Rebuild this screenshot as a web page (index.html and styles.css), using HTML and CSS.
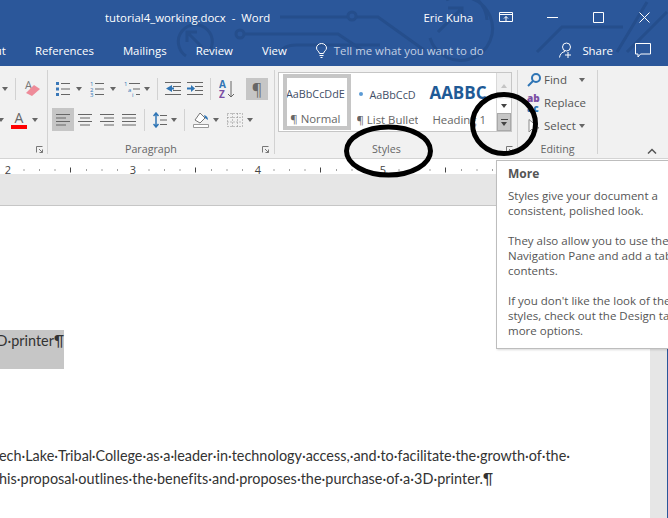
FILE: index.html
```html
<!DOCTYPE html>
<html lang="en">
  <head>
    <meta charset="UTF-8" />
    <title>tutorial4_working.docx - Word</title>
    <link rel="stylesheet" href="styles.css">
  </head>
  <body>
    <div class="window">
      <!-- Title bar and tabs -->
      <header class="top">
        <svg class="circuit" width="668" height="66" viewBox="0 0 668 66">
          <g fill="none" stroke="#254e8c" stroke-width="3">
            <path d="M186 56 A17 17 0 1 1 206 55" />
            <path d="M202 47 L188 33 M187 42 V32 H197" />
            <path d="M280 17 H348 M356 17 H378 L424 50" />
            <circle cx="352" cy="16" r="4" />
            <circle cx="240" cy="34" r="4" />
            <path d="M244 34 H338 L362 50" />
            <path d="M280 52 Q284 45 296 45 H380" />
            <path d="M430 38 A32 32 0 1 0 446 0 M478 0 A32 32 0 0 1 487 20" />
            <path d="M438 32 L460 10 M448 8 H462 V22" />
            <path d="M537 52 L562 27 H623 M617 52 L647 2 M627 52 L667 12" />
          </g>
        </svg>
        <div class="title-row">
          <span class="doc-title">tutorial4_working.docx&nbsp; - &nbsp;Word</span>
          <span class="user-name">Eric Kuha</span>
          <span class="win-btn">
            <svg width="14" height="11" viewBox="0 0 14 11" fill="none" stroke="#fff"><path d="M.5 .5H13.5V9.5H.5ZM.5 2.5H13.5M7 9V4.5M5 6.5L7 4.5L9 6.5" /></svg>
          </span>
          <span class="win-btn">
            <svg width="11" height="11" viewBox="0 0 11 11" stroke="#fff"><path d="M0 5.5H11" /></svg>
          </span>
          <span class="win-btn">
            <svg width="11" height="11" viewBox="0 0 11 11" fill="none" stroke="#fff"><path d="M.5 .5H10.5V10.5H.5Z" /></svg>
          </span>
          <span class="win-btn">
            <svg width="11" height="11" viewBox="0 0 11 11" stroke="#fff"><path d="M.5 .5L10.5 10.5M10.5 .5L.5 10.5" /></svg>
          </span>
        </div>
        <nav class="tab-row">
          <span class="tab tab-cut">Layout</span>
          <span class="tab">References</span>
          <span class="tab">Mailings</span>
          <span class="tab">Review</span>
          <span class="tab">View</span>
          <span class="tell-me">
            <svg width="11" height="15" viewBox="0 0 11 15" fill="none" stroke="#fff"><path d="M3.5 10.5C3 8 .5 7.5 .5 5A5 4.5 0 0 1 10.5 5C10.5 7.5 8 8 7.5 10.5ZM3.5 12.5H7.5M4.500 14.5H6.5" /></svg>
            Tell me what you want to do
          </span>
          <span class="share">
            <svg width="16" height="16" viewBox="0 0 16 16" fill="none" stroke="#fff"><circle cx="7.5" cy="5" r="4" /><path d="M.5 15.5C1 12 3 10 6 9.5M9 10V16M6 13H12" /></svg>
            Share
          </span>
          <svg class="comment" width="16" height="15" viewBox="0 0 16 15" fill="none" stroke="#fff"><path d="M.5 .5H15.5V11H5.5L3 14V11H.5Z" /></svg>
        </nav>
      </header>

      <!-- Ribbon -->
      <section class="ribbon">
        <div class="group group-font">
          <div class="row">
            <i class="caret caret-first"></i>
            <i class="sep"></i>
            <svg class="ml1" width="16" height="18" viewBox="0 0 16 18">
              <text x="1" y="9" font-size="11" fill="#777" font-family="Open Sans">A</text>
              <path d="M2 13L10 5L16 9L8 16Z" fill="#ee8b99" />
            </svg>
          </div>
          <div class="row row-two font-color">
            <i class="caret caret-cut"></i>
            <span class="color-a">A</span>
            <i class="caret caret-a"></i>
          </div>
          <div class="group-label label-font">
            <svg class="launcher" width="7" height="7" viewBox="0 0 7 7" fill="none" stroke="#777"><path d="M.5 6.5V.5H6.5M3 3L6.5 6.5M6.5 3.5V6.5H3.5" /></svg>
          </div>
        </div>

        <div class="group group-para">
          <div class="row pl7">
            <svg width="15" height="14" viewBox="0 0 15 14">
              <path d="M1 0h3v3H1zM1 5.5h3v3H1zM1 11h3v3H1z" fill="#3a78b8" />
              <path d="M6 1.5H15M6 7H15M6 12.5H15" stroke="#666" />
            </svg>
            <i class="caret"></i>
            <svg width="14" height="16" viewBox="0 0 14 16">
              <text x="0" y="5" class="mini">1</text>
              <text x="0" y="10.5" class="mini">2</text>
              <text x="0" y="16" class="mini">3</text>
              <path d="M5 2.5H14M5 8H14M5 13.5H14" stroke="#666" />
            </svg>
            <i class="caret"></i>
            <svg width="16" height="16" viewBox="0 0 16 16">
              <text x="0" y="5" class="mini">1</text>
              <text x="4" y="10.5" class="mini">a</text>
              <text x="8" y="16" class="mini">i</text>
              <path d="M5 2.5H16M9 8H16M12 13.5H16" stroke="#666" />
            </svg>
            <i class="caret caret-tight"></i>
            <i class="sep"></i>
            <svg width="16" height="14" viewBox="0 0 16 14">
              <path d="M0 .5H16M8 4.5H16M8 8.5H16M0 12.5H16" stroke="#666" />
              <path d="M7 3V10L1 6.5Z" fill="#2f75b5" />
              <path d="M5 5.5H9V7.5H5Z" fill="#2f75b5" />
            </svg>
            <svg class="ml6" width="16" height="14" viewBox="0 0 16 14">
              <path d="M0 .5H16M8 4.5H16M8 8.5H16M0 12.5H16" stroke="#666" />
              <path d="M4 3V10L8 6.5Z" fill="#2f75b5" />
              <path d="M0 5.5H5V7.5H0Z" fill="#2f75b5" />
            </svg>
            <i class="sep ml7"></i>
            <svg class="ml1" width="16" height="20" viewBox="0 0 16 20">
              <text x="0" y="9" class="sort-a">A</text>
              <text x="0" y="19" class="sort-z">Z</text>
              <path d="M12 2V18M9 15L12 18L15 15" fill="none" stroke="#666" />
            </svg>
            <span class="toggle toggle-pil ml11">¶</span>
          </div>
          <div class="row row-two pl4">
            <span class="toggle">
              <svg width="14" height="12" viewBox="0 0 14 12" stroke="#666"><path d="M0 .5H14M0 4H10M0 7.5H14M0 11H10" /></svg>
            </span>
            <span class="toggle off">
              <svg width="14" height="12" viewBox="0 0 14 12" stroke="#666"><path d="M0 .5H14M2 4H12M0 7.5H14M2 11H12" /></svg>
            </span>
            <span class="toggle off">
              <svg width="14" height="12" viewBox="0 0 14 12" stroke="#666"><path d="M0 .5H14M4 4H14M0 7.5H14M4 11H14" /></svg>
            </span>
            <span class="toggle off">
              <svg width="14" height="12" viewBox="0 0 14 12" stroke="#666"><path d="M0 .5H14M0 4H14M0 7.5H14M0 11H14" /></svg>
            </span>
            <i class="sep ml4"></i>
            <svg class="ml1" width="14" height="16" viewBox="0 0 14 16">
              <path d="M3 1V15M.5 4L3 1L5.5 4M.5 12L3 15L5.5 12" fill="none" stroke="#2f75b5" stroke-width="1.5" />
              <path d="M7 3.5H14M7 8H14M7 12.5H14" stroke="#666" />
            </svg>
            <i class="caret caret-tight"></i>
            <i class="sep"></i>
            <svg class="ml1" width="16" height="16" viewBox="0 0 16 16">
              <path d="M2 8L7 1L12 6L7 11Z" fill="#fff" stroke="#777" />
              <path d="M11 3Q15 4 15 8L12 6Z" fill="#2f75b5" />
              <path d="M.5 12.5H15.5V15.5H.5Z" fill="#fff" stroke="#999" />
            </svg>
            <i class="caret caret-tight"></i>
            <svg class="ml1" width="16" height="14" viewBox="0 0 16 14" fill="none" stroke="#8a8a8a" stroke-dasharray="1 2">
              <path d="M.5 .5H15.5V13.5H.5ZM5.5 .5V13.5M10.5 .5V13.5M.5 4.5H15.5M.5 9H15.5" />
            </svg>
            <i class="caret caret-tight"></i>
          </div>
          <div class="group-label label-para">
            <span>Paragraph</span>
            <svg class="launcher" width="7" height="7" viewBox="0 0 7 7" fill="none" stroke="#777"><path d="M.5 6.5V.5H6.5M3 3L6.5 6.5M6.5 3.5V6.5H3.5" /></svg>
          </div>
        </div>

        <div class="group group-styles">
          <div class="gallery">
            <div class="style-item item-normal">
              <span class="sample">AaBbCcDdE</span>
              <span class="style-name">¶ Normal</span>
            </div>
            <div class="style-item item-bullet">
              <span class="sample"><b class="dot"></b>AaBbCcD</span>
              <span class="style-name">¶ List Bullet</span>
            </div>
            <div class="style-item item-heading">
              <span class="sample sample-heading">AABBCC</span>
              <span class="style-name">Heading 1</span>
            </div>
            <div class="gallery-scroll">
              <span class="scroll-btn scroll-up"><i class="up"></i></span>
              <span class="scroll-btn scroll-down"><i class="down"></i></span>
              <span class="scroll-btn scroll-more"><i class="more-line"></i><i class="down"></i></span>
            </div>
          </div>
          <div class="group-label label-styles">
            <span>Styles</span>
            <svg class="launcher" width="7" height="7" viewBox="0 0 7 7" fill="none" stroke="#777"><path d="M.5 6.5V.5H6.5M3 3L6.5 6.5M6.5 3.5V6.5H3.5" /></svg>
          </div>
        </div>

        <div class="group group-editing">
          <div class="edit-row">
            <svg width="14" height="14" viewBox="0 0 14 14" fill="none" stroke="#2f75b5" stroke-width="2"><circle cx="9" cy="5" r="4" /><path d="M6 8L1 13" /></svg>
            <span>Find</span>
            <i class="caret caret-find"></i>
          </div>
          <div class="edit-row">
            <span class="replace-icon"><b>ab</b><b>ac</b></span>
            <span>Replace</span>
          </div>
          <div class="edit-row">
            <svg width="14" height="14" viewBox="0 0 14 14" fill="#fff" stroke="#888"><path d="M2 .5V13L5 10L8 13.5L10 12.5L8 9H12Z" /></svg>
            <span>Select</span>
            <i class="caret caret-select"></i>
          </div>
          <div class="group-label label-editing"><span>Editing</span></div>
        </div>

        <div class="collapse">
          <svg width="10" height="6" viewBox="0 0 10 6" fill="none" stroke="#555" stroke-width="1.5"><path d="M1 5.5L5 1.5L9 5.5" /></svg>
        </div>
      </section>

      <!-- Ruler -->
      <div class="ruler">
        <svg width="668" height="10" viewBox="0 0 668 10">
          <defs>
            <pattern id="ticks" x="8" y="0" width="125" height="10" patternUnits="userSpaceOnUse">
              <path d="M15.5 5.5h1v1h-1zM31 5.5h1v1h-1zM46.5 5.5h1v1h-1zM62 3.5h1v5h-1zM78 5.5h1v1h-1zM93.5 5.5h1v1h-1zM109 5.5h1v1h-1z" fill="#444" />
            </pattern>
          </defs>
          <rect width="668" height="10" fill="url(#ticks)" />
          <text x="8" y="9.5" class="ruler-num">2</text>
          <text x="133" y="9.5" class="ruler-num">3</text>
          <text x="258" y="9.5" class="ruler-num">4</text>
          <text x="383" y="9.5" class="ruler-num">5</text>
        </svg>
      </div>

      <!-- Document area -->
      <main class="workspace">
        <div class="page">
          <div class="selected"><span>3D·printer¶</span></div>
          <p class="doc-line line-one">Leech·Lake·Tribal·College·as·a·leader·in·technology·access,·and·to·facilitate·the·growth·of·the·</p>
          <p class="doc-line line-two">This·proposal·outlines·the·benefits·and·proposes·the·purchase·of·a·3D·printer.¶</p>
        </div>
        <div class="scrollbar"></div>
      </main>

      <!-- Tooltip -->
      <aside class="tooltip">
        <h4>More</h4>
        <p>Styles give your document a<br>consistent, polished look.</p>
        <p>They also allow you to use the<br>Navigation Pane and add a table of<br>contents.</p>
        <p>If you don't like the look of these<br>styles, check out the Design tab for<br>more options.</p>
      </aside>

      <!-- Hand drawn marks over the screenshot -->
      <svg class="marks" width="668" height="518" viewBox="0 0 668 518" fill="none" stroke="#000" stroke-width="5">
        <ellipse cx="388.5" cy="151" rx="42" ry="24" />
        <ellipse cx="504" cy="124" rx="31.5" ry="29.5" />
      </svg>
    </div>
  </body>
</html>
```

FILE: styles.css
```css
* {
  box-sizing: border-box;
}

body {
  margin: 0;
  font-family: "Open Sans", sans-serif;
  background-color: #fff;
}

.window {
  position: relative;
  width: 668px;
  height: 518px;
  overflow: hidden;
  display: flex;
  flex-direction: column;
  color: #555;
}

i,
b {
  font-style: normal;
  display: block;
}

/* Title bar */
.top {
  position: relative;
  height: 66px;
  flex-shrink: 0;
  background-color: #2b579a;
  color: #fff;
  font-size: 11.4px;
}

.circuit {
  position: absolute;
  top: 0;
  left: 0;
}

.title-row,
.tab-row {
  position: relative;
  display: flex;
  align-items: center;
  white-space: nowrap;
}

.title-row {
  height: 36px;
  padding: 0 1px 2px 105px;
}

.user-name {
  margin-left: auto;
  margin-right: 10px;
}

.win-btn {
  width: 46px;
  display: flex;
  justify-content: center;
}

.tab-row {
  height: 28px;
  gap: 29px;
  padding-right: 17px;
}

.tab-cut {
  margin-left: -30px;
}

.tell-me {
  display: flex;
  align-items: center;
  gap: 7px;
  color: #c3d0e4;
}

.share {
  display: flex;
  align-items: center;
  gap: 7px;
  margin-left: auto;
}

.comment {
  margin-left: -7px;
}

/* Ribbon */
.ribbon {
  display: flex;
  align-items: flex-start;
  height: 93px;
  flex-shrink: 0;
  padding-top: 4px;
  background-color: #f1f1f1;
  border-bottom: 1px solid #d4d4d4;
  font-size: 11.5px;
}

.group {
  position: relative;
  height: 84px;
  border-right: 1px solid #d2d2d2;
  flex-shrink: 0;
}

.group-font {
  width: 48px;
  padding-top: 8px;
}

.group-para {
  width: 227px;
  padding-top: 8px;
}

.group-styles {
  width: 243px;
  padding: 2px 0 0 3px;
}

.group-editing {
  width: 80px;
  padding-top: 0;
}

.row {
  display: flex;
  align-items: center;
  height: 22px;
}

.row-two {
  height: 23px;
  margin-top: 8px;
}

.pl4 {
  padding-left: 4px;
}

.pl7 {
  padding-left: 7px;
}

.ml1 {
  margin-left: 1px;
}

.ml4 {
  margin-left: 4px;
}

.ml6 {
  margin-left: 6px;
}

.ml7 {
  margin-left: 7px;
}

.ml11 {
  margin-left: 11px;
}

.caret {
  width: 0;
  height: 0;
  margin: 0 8px 0 6px;
  border-left: 3.5px solid transparent;
  border-right: 3.5px solid transparent;
  border-top: 4px solid #666;
  flex-shrink: 0;
}

.caret-tight {
  margin: 0 7px 0 4px;
}

.caret-first {
  margin: 0 7px 0 2px;
}

.sep {
  width: 1px;
  height: 22px;
  margin-right: 7px;
  background-color: #d2d2d2;
  flex-shrink: 0;
}

.mini {
  font: 6px "Open Sans", sans-serif;
  fill: #2f75b5;
}

.sort-a,
.sort-z {
  font: bold 10px "Open Sans", sans-serif;
}

.sort-a {
  fill: #2f75b5;
}

.sort-z {
  fill: #7b4ea3;
}

.toggle {
  width: 22px;
  height: 23px;
  display: flex;
  align-items: center;
  justify-content: center;
  background-color: #c6c6c6;
}

.toggle.off {
  background-color: transparent;
}

.toggle-pil {
  height: 22px;
  font-size: 16px;
  color: #666;
}

.font-color {
  margin-left: -4px;
}

.caret-cut {
  margin: 0 7px 0 2px;
}

.color-a {
  width: 16px;
  height: 18px;
  font-size: 14px;
  line-height: 14px;
  text-align: center;
  color: #666;
  border-bottom: 4px solid #f00;
}

.caret-a {
  margin: 0 0 0 5px;
}

.group-label {
  display: flex;
  justify-content: space-between;
  align-items: center;
  height: 14px;
  font-size: 10.7px;
  color: #666;
}

.label-font {
  margin-top: 11px;
  padding-left: 36px;
}

.label-para {
  margin-top: 11px;
  padding: 0 5px 0 77px;
}

.label-styles {
  margin-top: 10px;
  padding: 0 4px 0 94px;
}

.label-editing {
  margin-top: 6px;
  justify-content: center;
}

/* Style gallery */
.gallery {
  display: flex;
  width: 234px;
  height: 60px;
  background-color: #fff;
  border: 1px solid #c6c6c6;
}

.style-item {
  display: flex;
  flex-direction: column;
  align-items: center;
  overflow: hidden;
  white-space: nowrap;
}

.item-normal {
  width: 68px;
  height: 56px;
  margin: 1px 6px 0 4px;
  border: 4px solid #c6c6c6;
  padding: 6px 3px 0 0;
}

.item-bullet {
  width: 62px;
  margin-right: 11px;
  padding-top: 11px;
}

.item-heading {
  width: 67px;
  padding-top: 7px;
  align-items: flex-start;
}

.sample {
  display: flex;
  align-items: center;
  height: 20px;
  font-size: 10.8px;
  color: #3f4e66;
}

.sample-heading {
  width: 58px;
  height: 24px;
  overflow: hidden;
  font-size: 17px;
  font-weight: bold;
  color: #1f5a96;
}

.dot {
  width: 4px;
  height: 4px;
  margin-right: 6px;
  border-radius: 50%;
  background-color: #5b9bd5;
}

.style-name {
  margin-top: 8px;
  font-size: 11.4px;
  color: #666;
}

.item-heading .style-name {
  margin: 8px 0 0 3px;
}

.gallery-scroll {
  display: flex;
  flex-direction: column;
  width: 15px;
  margin-left: auto;
  border-left: 1px solid #d9d9d9;
}

.scroll-btn {
  display: flex;
  flex-direction: column;
  align-items: center;
  justify-content: center;
  gap: 2px;
}

.scroll-up {
  height: 26px;
  background-color: #f0f0f0;
}

.scroll-down {
  height: 14px;
}

.scroll-more {
  height: 18px;
  background-color: #c6c6c6;
  border: 1px solid #a9a9a9;
}

.up {
  border-left: 3.5px solid transparent;
  border-right: 3.5px solid transparent;
  border-bottom: 4px solid #c4c4c4;
}

.down {
  border-left: 3.5px solid transparent;
  border-right: 3.5px solid transparent;
  border-top: 4px solid #444;
}

.more-line {
  width: 7px;
  height: 1px;
  background-color: #444;
}

/* Editing */
.edit-row {
  display: flex;
  align-items: center;
  gap: 3px;
  height: 21px;
  margin-bottom: 2px;
  padding-left: 9px;
  font-size: 11.5px;
  color: #555;
}

.edit-row:first-child {
  margin-top: -1px;
}

.replace-icon {
  width: 14px;
  height: 20px;
  font-size: 10px;
  line-height: 10px;
  font-weight: bold;
}

.replace-icon b:first-child {
  color: #7b4ea3;
}

.replace-icon b:last-child {
  color: #2f75b5;
}

.caret-find {
  margin: 0 0 0 9px;
}

.caret-select {
  margin: 0;
}

.collapse {
  flex: 1;
  height: 84px;
  display: flex;
  align-items: flex-end;
  justify-content: flex-end;
  padding: 0 11px 0 0;
}

/* Ruler */
.ruler {
  height: 10px;
  margin-top: 5px;
  flex-shrink: 0;
  background-color: #fff;
}

.ruler svg {
  display: block;
}

.ruler-num {
  font: 11px "Open Sans", sans-serif;
  fill: #444;
  text-anchor: middle;
}

/* Document */
.workspace {
  flex: 1;
  display: flex;
  padding-top: 31px;
  background-color: #e6e6e6;
}

.page {
  width: 650px;
  flex-shrink: 0;
  overflow: hidden;
  padding-top: 124px;
  border-top: 1px solid #c6c6c6;
  background-color: #fff;
  font-family: "Lato", sans-serif;
  font-size: 14.4px;
  color: #333;
}

.selected {
  display: flex;
  justify-content: flex-end;
  width: 64px;
  height: 39px;
  line-height: 22px;
  white-space: nowrap;
  background-color: #c6c6c6;
}

.doc-line {
  display: flex;
  justify-content: flex-end;
  margin: 0;
  height: 23px;
  line-height: 23px;
  white-space: nowrap;
}

.line-one {
  width: 570px;
  margin-top: 75px;
}

.line-two {
  width: 493px;
  letter-spacing: 0.03px;
}

.scrollbar {
  flex: 1;
  background-color: #e6e6e6;
  border-right: 1px solid #2b579a;
}

/* Tooltip */
.tooltip {
  position: absolute;
  top: 160px;
  left: 496px;
  width: 240px;
  height: 189px;
  padding: 5px 11px;
  background-color: #fff;
  border: 1px solid #bdbdbd;
  box-shadow: 1px 1px 2px rgba(0, 0, 0, 0.15);
  font-size: 11.5px;
  line-height: 15px;
  color: #555;
  white-space: nowrap;
}

.tooltip h4 {
  margin: 0 0 7px;
  font-size: 12px;
  line-height: 15px;
}

.tooltip p {
  margin: 0 0 15px;
}

.marks {
  position: absolute;
  top: 0;
  left: 0;
  pointer-events: none;
}
```
